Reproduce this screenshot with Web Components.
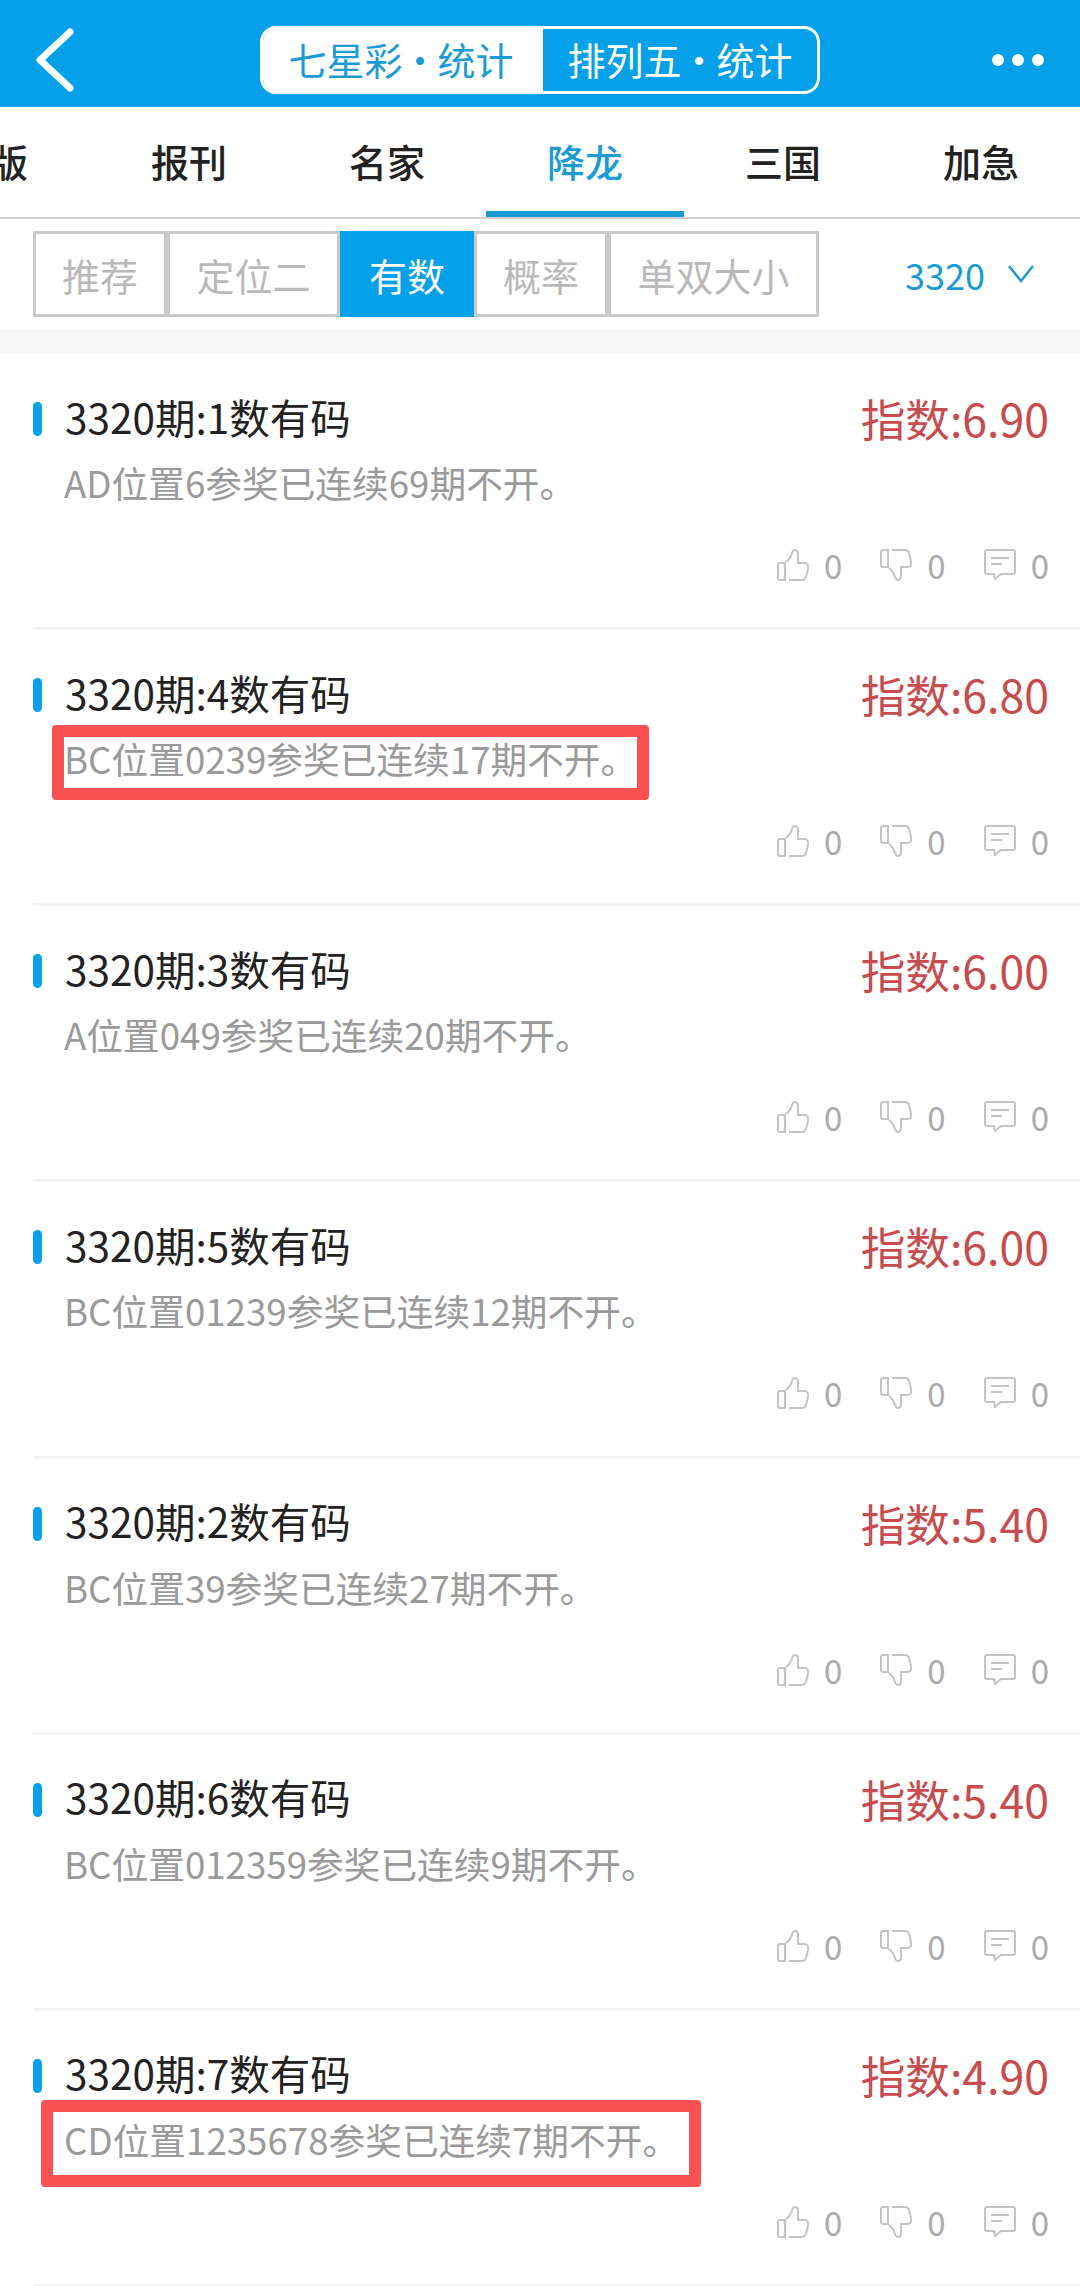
<!DOCTYPE html>
<html lang="zh">
<head>
<meta charset="utf-8">
<title>降龙</title>
<style>
    html, body { margin: 0; background: #fff; overflow: hidden; }
    body { font-family: "Noto Sans CJK SC", "Noto Sans", sans-serif; width: 1080px; height: 2286px; }
</style>
</head>
<body>
<app-header>
    <span slot="left">七星彩 · 统计</span>
    <span slot="right">排列五 · 统计</span>
</app-header>
<tab-bar>
    <tab-item first>版</tab-item>
    <tab-item>报刊</tab-item>
    <tab-item>名家</tab-item>
    <tab-item active>降龙</tab-item>
    <tab-item>三国</tab-item>
    <tab-item>加急</tab-item>
</tab-bar>
<filter-bar period="3320">
    <filter-item style="width:134px">推荐</filter-item>
    <filter-item style="width:173px">定位二</filter-item>
    <filter-item style="width:134px" active>有数</filter-item>
    <filter-item style="width:134px">概率</filter-item>
    <filter-item style="width:211px">单双大小</filter-item>
</filter-bar>
<stat-list>
    <stat-row>
        <span slot="title">3320期:1数有码</span><span slot="score">指数:6.90</span>
        <span slot="desc">AD位置6参奖已连续69期不开。</span>
    </stat-row>
    <stat-row>
        <span slot="title">3320期:4数有码</span><span slot="score">指数:6.80</span>
        <span slot="desc">BC位置0239参奖已连续17期不开。</span>
        <red-mark slot="mark" style="left:19px;top:95px;width:597px;height:75px"></red-mark>
    </stat-row>
    <stat-row>
        <span slot="title">3320期:3数有码</span><span slot="score">指数:6.00</span>
        <span slot="desc">A位置049参奖已连续20期不开。</span>
    </stat-row>
    <stat-row>
        <span slot="title">3320期:5数有码</span><span slot="score">指数:6.00</span>
        <span slot="desc">BC位置01239参奖已连续12期不开。</span>
    </stat-row>
    <stat-row>
        <span slot="title">3320期:2数有码</span><span slot="score">指数:5.40</span>
        <span slot="desc">BC位置39参奖已连续27期不开。</span>
    </stat-row>
    <stat-row>
        <span slot="title">3320期:6数有码</span><span slot="score">指数:5.40</span>
        <span slot="desc">BC位置012359参奖已连续9期不开。</span>
    </stat-row>
    <stat-row>
        <span slot="title">3320期:7数有码</span><span slot="score">指数:4.90</span>
        <span slot="desc">CD位置1235678参奖已连续7期不开。</span>
        <red-mark slot="mark" style="left:8px;top:89px;width:660px;height:87px"></red-mark>
    </stat-row>
</stat-list>

<script>
class AppHeader extends HTMLElement {
    constructor() {
        super();
        this.attachShadow({ mode: "open" });
        this.shadowRoot.innerHTML = `
            <style>
                :host {
                    display: grid;
                    grid-template-columns: 227px 560px 1fr;
                    align-items: center;
                    height: 107px;
                    padding: 12px 36px 0 33px;
                    box-sizing: border-box;
                    background: #04a0e9;
                }
                .back { width: 44px; height: 66px; }
                .toggle {
                    display: flex;
                    height: 68px;
                    box-sizing: border-box;
                    border: 3px solid #fff;
                    border-radius: 16px;
                    overflow: hidden;
                    font-size: 38px;
                    line-height: 60px;
                    word-spacing: -10px;
                    text-align: center;
                    white-space: nowrap;
                }
                .left { width: 276px; padding-right: 4px; background: #fff; color: #1b9bd6; }
                .right { flex: 1; color: #fff; }
                .dots { display: flex; justify-content: flex-end; gap: 8px; }
                .dots i { width: 12px; height: 12px; border-radius: 50%; background: #fff; }
            </style>
            <svg class="back" viewBox="0 0 44 66">
                <path d="M37 5 L7 33 L37 61" fill="none" stroke="#fff" stroke-width="7" stroke-linecap="round" stroke-linejoin="round"/>
            </svg>
            <div class="toggle">
                <div class="left"><slot name="left"></slot></div>
                <div class="right"><slot name="right"></slot></div>
            </div>
            <div class="dots"><i></i><i></i><i></i></div>
        `;
    }
}

class TabBar extends HTMLElement {
    constructor() {
        super();
        this.attachShadow({ mode: "open" });
        this.shadowRoot.innerHTML = `
            <style>
                :host {
                    display: flex;
                    height: 112px;
                    box-sizing: border-box;
                    border-bottom: 2px solid #cfcfcf;
                    overflow: hidden;
                }
            </style>
            <slot></slot>
        `;
    }
}

class TabItem extends HTMLElement {
    constructor() {
        super();
        this.attachShadow({ mode: "open" });
        this.shadowRoot.innerHTML = `
            <style>
                :host {
                    display: flex;
                    align-items: center;
                    justify-content: center;
                    width: 198px;
                    height: 110px;
                    padding-bottom: 4px;
                    box-sizing: border-box;
                    flex: none;
                    font-size: 38px;
                    font-weight: 500;
                    color: #222;
                }
                :host([first]) {
                    width: 90px;
                    justify-content: flex-end;
                    padding-right: 62px;
                    text-indent: -9px;
                    overflow: hidden;
                }
                :host([active]) {
                    color: #1b9bd6;
                    padding: 2px 0 0;
                    border-bottom: 6px solid #1b9bd6;
                }
            </style>
            <slot></slot>
        `;
    }
}

class FilterBar extends HTMLElement {
    constructor() {
        super();
        this.attachShadow({ mode: "open" });
        this.shadowRoot.innerHTML = `
            <style>
                :host {
                    display: flex;
                    align-items: flex-start;
                    height: 111px;
                    padding: 12px 45px 0 33px;
                    box-sizing: border-box;
                }
                .items { display: flex; }
                .period {
                    display: flex;
                    align-items: center;
                    gap: 22px;
                    height: 86px;
                    margin-left: auto;
                    font-size: 36px;
                    color: #1b9bd6;
                }
                svg { width: 28px; height: 20px; }
            </style>
            <div class="items"><slot></slot></div>
            <div class="period">
                <span class="num"></span>
                <svg viewBox="0 0 28 20"><path d="M2 2 L14 17 L26 2" fill="none" stroke="#1b9bd6" stroke-width="2.5"/></svg>
            </div>
        `;
        this.shadowRoot.querySelector(".num").textContent = this.getAttribute("period");
    }
}

class FilterItem extends HTMLElement {
    constructor() {
        super();
        this.attachShadow({ mode: "open" });
        this.shadowRoot.innerHTML = `
            <style>
                :host {
                    display: flex;
                    align-items: center;
                    justify-content: center;
                    height: 86px;
                    box-sizing: border-box;
                    border: 3px solid #cacaca;
                    font-size: 38px;
                    color: #b9b9b9;
                }
                :host([active]) {
                    background: #04a0e9;
                    border-color: #04a0e9;
                    color: #fff;
                }
            </style>
            <slot></slot>
        `;
    }
}

class StatList extends HTMLElement {
    constructor() {
        super();
        this.attachShadow({ mode: "open" });
        this.shadowRoot.innerHTML = `
            <style>
                :host { display: block; border-top: 24px solid #f6f6f6; }
            </style>
            <slot></slot>
        `;
    }
}

class StatRow extends HTMLElement {
    constructor() {
        super();
        this.attachShadow({ mode: "open" });
        this.shadowRoot.innerHTML = `
            <style>
                :host {
                    display: flex;
                    flex-direction: column;
                    position: relative;
                    height: 276.17px;
                    margin-left: 33px;
                    padding: 40px 31px 0 0;
                    box-sizing: border-box;
                    border-bottom: 3px solid #f4f4f4;
                }
                .head { display: flex; align-items: center; justify-content: space-between; height: 50px; }
                .title { display: flex; align-items: center; gap: 23px; font-size: 40.5px; color: #222; white-space: nowrap; }
                .title::before { content: ""; width: 9px; height: 34px; border-radius: 5px; background: #04a0e9; }
                .title div { margin-bottom: 6px; }
                .score { margin-bottom: 3px; font-size: 44.6px; color: #c84b4e; white-space: nowrap; }
                .desc { margin: 15px 0 0 31px; height: 46px; font-size: 36.7px; line-height: 46px; color: #9a9a9a; white-space: nowrap; }
                .actions { display: flex; justify-content: flex-end; gap: 38px; margin-top: 44px; }
            </style>
            <div class="head">
                <div class="title"><div><slot name="title"></slot></div></div>
                <div class="score"><slot name="score"></slot></div>
            </div>
            <div class="desc"><slot name="desc"></slot></div>
            <div class="actions">
                <action-count kind="up"></action-count>
                <action-count kind="down"></action-count>
                <action-count kind="comment"></action-count>
            </div>
            <slot name="mark"></slot>
        `;
    }
}

class ActionCount extends HTMLElement {
    constructor() {
        super();
        this.attachShadow({ mode: "open" });
        const thumb = `
            <path d="M8 14 H3 Q1 14 1 16 V29 Q1 31 3 31 H8 Z"/>
            <path d="M12 31 H25 Q28 31 29 28 L31 20 Q32 14 27 14 H21 V5 Q21 1 18 1 Q16 1 15 4 Q14 9 9 13"/>
        `;
        const shapes = {
            up: thumb,
            down: `<g transform="matrix(1 0 0 -1 0 32)">${thumb}</g>`,
            comment: `
                <path d="M3 1 H29 Q31 1 31 3 V23 Q31 25 29 25 H17 L11 30 L10 25 H3 Q1 25 1 23 V3 Q1 1 3 1 Z"/>
                <path d="M7 9 H25 M7 15 H18"/>
            `,
        };
        this.shadowRoot.innerHTML = `
            <style>
                :host {
                    display: flex;
                    align-items: center;
                    gap: 15px;
                    height: 32px;
                    font-size: 33px;
                    line-height: 32px;
                    color: #ababab;
                }
                svg { width: 32px; height: 32px; fill: none; stroke: #c4c4c4; stroke-width: 2; }
            </style>
            <svg viewBox="0 0 32 32">${shapes[this.getAttribute("kind")]}</svg>
            <span>0</span>
        `;
    }
}

class RedMark extends HTMLElement {
    constructor() {
        super();
        this.attachShadow({ mode: "open" });
        this.shadowRoot.innerHTML = `
            <style>
                :host {
                    display: block;
                    position: absolute;
                    box-sizing: border-box;
                    border: 12px solid #fa5252;
                    border-radius: 4px;
                }
            </style>
        `;
    }
}

customElements.define("app-header", AppHeader);
customElements.define("tab-bar", TabBar);
customElements.define("tab-item", TabItem);
customElements.define("filter-bar", FilterBar);
customElements.define("filter-item", FilterItem);
customElements.define("stat-list", StatList);
customElements.define("stat-row", StatRow);
customElements.define("action-count", ActionCount);
customElements.define("red-mark", RedMark);
</script>
</body>
</html>
